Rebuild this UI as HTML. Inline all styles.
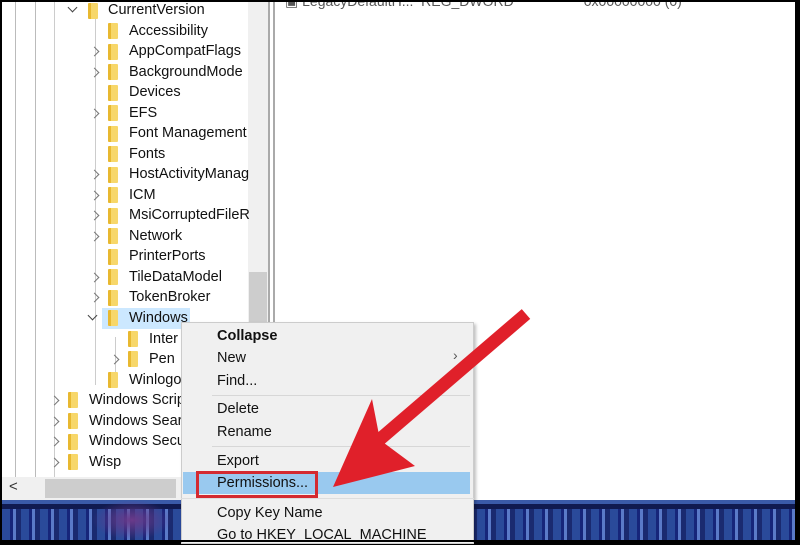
<!DOCTYPE html>
<html><head><meta charset="utf-8"><style>
*{margin:0;padding:0;box-sizing:border-box}
body{width:800px;height:542px;overflow:hidden;background:#000;position:relative;font-family:"Liberation Sans",sans-serif;}
.a{position:absolute}
.row{position:absolute;font-size:14.5px;color:#111;line-height:20px;white-space:nowrap}
.fold{position:absolute;width:10px;height:16px;background:linear-gradient(90deg,#e8b830 0 30%,#f7d76a 30% 100%);border-radius:1px}
.chev{position:absolute;width:7px;height:7px;border-right:1.5px solid #777;border-bottom:1.5px solid #777;transform:rotate(-45deg);margin-left:2px;margin-top:7px}
.chev.d{transform:rotate(45deg);margin-top:4px;margin-left:3px;border-color:#444}
.m{position:absolute;left:217px;font-size:14.5px;color:#111;line-height:20px}
</style></head><body>
<div class="a" style="left:2px;top:2px;width:793px;height:538px;background:#fff;overflow:hidden">
 <div class="a" style="left:283px;top:-9px;font-size:14px;color:#555;white-space:nowrap">▣ LegacyDefaultH...&nbsp;&nbsp;REG_DWORD&nbsp;&nbsp;&nbsp;&nbsp;&nbsp;&nbsp;&nbsp;&nbsp;&nbsp;&nbsp;&nbsp;&nbsp;&nbsp;&nbsp;&nbsp;&nbsp;&nbsp;&nbsp;0x00000000 (0)</div>
 <div class="a" style="left:13px;top:0;width:1px;height:476px;background:#bbb"></div>
 <div class="a" style="left:33px;top:0;width:1px;height:476px;background:#bbb"></div>
 <div class="a" style="left:52px;top:0;width:1px;height:476px;background:#ccc"></div>
 <div class="a" style="left:93px;top:15px;width:1px;height:368px;background:#ccc"></div>
 <div class="a" style="left:113px;top:335px;width:1px;height:40px;background:#ccc"></div>
 <div class="a" style="left:246px;top:0;width:20px;height:476px;background:#f0f0f0"></div>
 <div class="a" style="left:247px;top:270px;width:18px;height:60px;background:#cdcdcd"></div>
 <div class="a" style="left:266px;top:0;width:2px;height:498px;background:#aaa"></div>
 <div class="a" style="left:271px;top:0;width:2px;height:498px;background:#aaa"></div>
 <div class="a" style="left:100px;top:306px;width:88px;height:21px;background:#cce8ff"></div>
 <div class="a" style="left:0;top:475px;width:266px;height:23px;background:#f0f0f0"></div>
 <div class="a" style="left:43px;top:477px;width:131px;height:19px;background:#cdcdcd"></div>
 <div class="a" style="left:7px;top:476px;font-size:15px;color:#333">&lt;</div>
 <div class="a" style="left:0;top:498px;width:793px;height:40px;background:repeating-linear-gradient(90deg,#2a4a9a 0 8px,#16257a 8px 11px,#5a7ac8 11px 14px,#1a2a70 14px 19px);"></div>
 <div class="a" style="left:0;top:498px;width:793px;height:4px;background:#3a5aa8"></div>
 <div class="a" style="left:0;top:502px;width:793px;height:5px;background:#101a50"></div>
 <div class="a" style="left:90px;top:498px;width:80px;height:40px;background:radial-gradient(#6a3a8a,transparent 70%)"></div>
</div>
<div class="chev d" style="left:66px;top:0px"></div>
<div class="fold" style="left:88px;top:3px"></div><div class="row" style="left:108px;top:0px">CurrentVersion</div>
<div class="fold" style="left:108px;top:23px"></div><div class="row" style="left:129px;top:21px">Accessibility</div>
<div class="chev" style="left:89px;top:41px"></div><div class="fold" style="left:108px;top:44px"></div><div class="row" style="left:129px;top:41px">AppCompatFlags</div>
<div class="chev" style="left:89px;top:62px"></div><div class="fold" style="left:108px;top:64px"></div><div class="row" style="left:129px;top:62px">BackgroundMode</div>
<div class="fold" style="left:108px;top:85px"></div><div class="row" style="left:129px;top:82px">Devices</div>
<div class="chev" style="left:89px;top:103px"></div><div class="fold" style="left:108px;top:105px"></div><div class="row" style="left:129px;top:103px">EFS</div>
<div class="fold" style="left:108px;top:126px"></div><div class="row" style="left:129px;top:123px">Font Management</div>
<div class="fold" style="left:108px;top:146px"></div><div class="row" style="left:129px;top:144px">Fonts</div>
<div class="chev" style="left:89px;top:164px"></div><div class="fold" style="left:108px;top:167px"></div><div class="row" style="left:129px;top:164px">HostActivityManag</div>
<div class="chev" style="left:89px;top:185px"></div><div class="fold" style="left:108px;top:187px"></div><div class="row" style="left:129px;top:185px">ICM</div>
<div class="chev" style="left:89px;top:205px"></div><div class="fold" style="left:108px;top:208px"></div><div class="row" style="left:129px;top:205px">MsiCorruptedFileR</div>
<div class="chev" style="left:89px;top:226px"></div><div class="fold" style="left:108px;top:228px"></div><div class="row" style="left:129px;top:226px">Network</div>
<div class="fold" style="left:108px;top:249px"></div><div class="row" style="left:129px;top:246px">PrinterPorts</div>
<div class="chev" style="left:89px;top:267px"></div><div class="fold" style="left:108px;top:269px"></div><div class="row" style="left:129px;top:267px">TileDataModel</div>
<div class="chev" style="left:89px;top:287px"></div><div class="fold" style="left:108px;top:290px"></div><div class="row" style="left:129px;top:287px">TokenBroker</div>
<div class="chev d" style="left:86px;top:308px"></div><div class="fold" style="left:108px;top:310px"></div><div class="row" style="left:129px;top:308px">Windows</div>
<div class="fold" style="left:128px;top:331px"></div><div class="row" style="left:149px;top:329px">Inter</div>
<div class="chev" style="left:109px;top:349px"></div><div class="fold" style="left:128px;top:351px"></div><div class="row" style="left:149px;top:349px">Pen</div>
<div class="fold" style="left:108px;top:372px"></div><div class="row" style="left:129px;top:370px">Winlogon</div>
<div class="chev" style="left:49px;top:390px"></div><div class="fold" style="left:68px;top:392px"></div><div class="row" style="left:89px;top:390px">Windows Script</div>
<div class="chev" style="left:49px;top:411px"></div><div class="fold" style="left:68px;top:413px"></div><div class="row" style="left:89px;top:411px">Windows Search</div>
<div class="chev" style="left:49px;top:431px"></div><div class="fold" style="left:68px;top:434px"></div><div class="row" style="left:89px;top:431px">Windows Security</div>
<div class="chev" style="left:49px;top:452px"></div><div class="fold" style="left:68px;top:454px"></div><div class="row" style="left:89px;top:452px">Wisp</div>
<div class="a" style="left:181px;top:322px;width:293px;height:222px;background:#f0f0f0;border:1px solid #ccc;box-shadow:2px 2px 3px rgba(0,0,0,.25)"></div>
<div class="m" style="top:326px;font-weight:bold">Collapse</div>
<div class="m" style="top:348px">New</div><div class="a" style="left:453px;top:347px;font-size:14px;color:#555">›</div>
<div class="m" style="top:371px">Find...</div>
<div class="a" style="left:212px;top:395px;width:258px;height:1px;background:#d7d7d7"></div>
<div class="m" style="top:399px">Delete</div>
<div class="m" style="top:422px">Rename</div>
<div class="a" style="left:212px;top:446px;width:258px;height:1px;background:#d7d7d7"></div>
<div class="m" style="top:451px">Export</div>
<div class="a" style="left:183px;top:472px;width:287px;height:22px;background:#99c9ef"></div>
<div class="a" style="left:196px;top:471px;width:122px;height:27px;border:3px solid #d42a30"></div>
<div class="m" style="top:473px">Permissions...</div>
<div class="a" style="left:181px;top:498px;width:293px;height:1px;background:#ddd"></div>
<div class="m" style="top:503px">Copy Key Name</div>
<div class="m" style="top:525px">Go to HKEY_LOCAL_MACHINE</div>
<svg class="a" style="left:0;top:0" width="800" height="542">
 <line x1="526" y1="314" x2="372" y2="446" stroke="#e0202a" stroke-width="13"/>
 <polygon points="333,487 372,399 380,440 415,466" fill="#e0202a"/>
 <rect x="0" y="0" width="800" height="2" fill="#000"/>
 <rect x="0" y="540" width="800" height="2" fill="#000"/>
 <rect x="0" y="0" width="2" height="542" fill="#000"/>
 <rect x="795" y="0" width="5" height="542" fill="#000"/>
</svg>
</body></html>
